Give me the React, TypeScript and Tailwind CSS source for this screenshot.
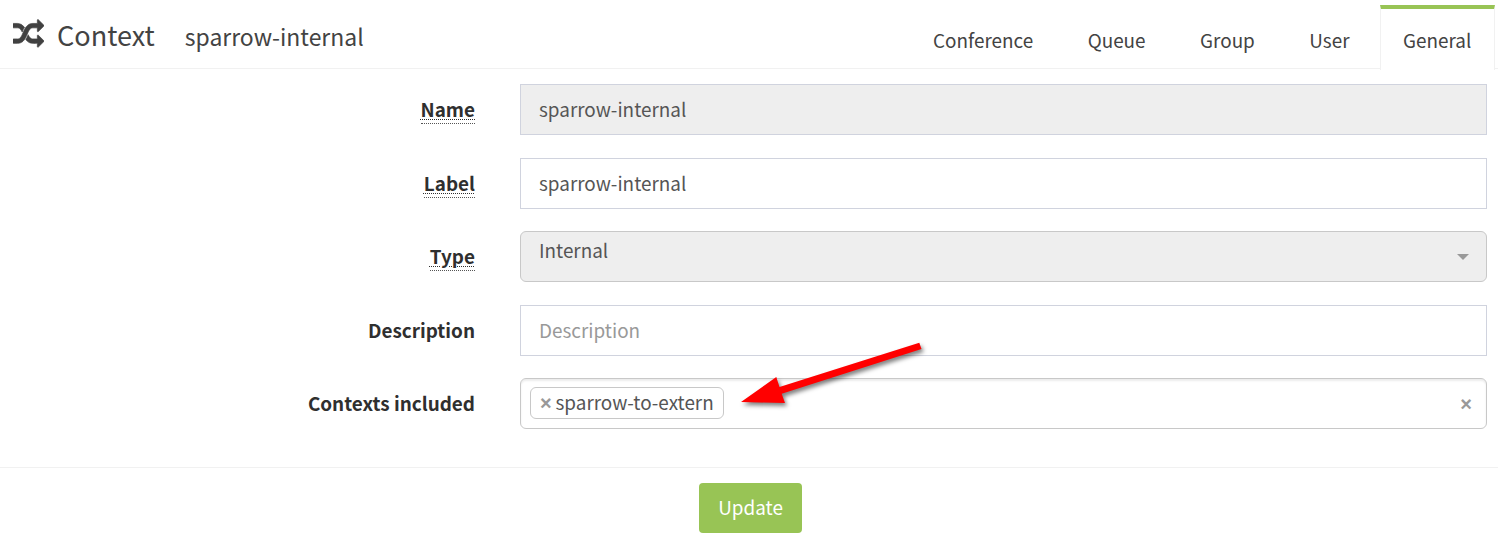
import type { ReactNode } from "react";

const tabs = ["Conference", "Queue", "Group", "User"];

function ShuffleIcon() {
  return (
    <svg viewBox="0 0 1792 1792" className="h-[31px] w-[31px] shrink-0" fill="#414141" stroke="#414141" strokeWidth="40">
      <path d="M666 481q-60 92-137 273-22-45-37-72.500t-40.500-63.500-51-56.500-63-35-81.500-14.500h-224q-14 0-23-9t-9-23v-192q0-14 9-23t23-9h224q250 0 410 225zM1792 1280q0 14-9 23l-320 320q-9 9-23 9-13 0-22.500-9.500t-9.500-22.500v-192q-32 0-85 .5t-81 1-73-1-71-5-64-10.500-63-18.500-58-28.500-59-40-55-53.500-56-69.500q59-93 136-273 22 45 37 72.500t40.500 63.500 51 56.500 63 35 81.500 14.500h256v-192q0-14 9-23t23-9q12 0 24 10l319 319q9 9 9 23zM1792 384q0 14-9 23l-320 320q-9 9-23 9-13 0-22.500-9.500t-9.500-22.500v-192h-256q-48 0-87 15t-69 45-51 61.500-45 77.500q-32 62-78 171-29 66-49.500 111t-54 105-64 100-74 83-90 68.500-106.500 42-128 16.500h-224q-14 0-23-9t-9-23v-192q0-14 9-23t23-9h224q48 0 87-15t69-45 51-61.500 45-77.500q32-62 78-171 29-66 49.500-111t54-105 64-100 74-83 90-68.500 106.500-42 128-16.500h256v-192q0-14 9-23t23-9q12 0 24 10l319 319q9 9 9 23z" />
    </svg>
  );
}

function Row({ label, hint, className, children }: { label: string; hint?: boolean; className?: string; children: ReactNode }) {
  return (
    <div className={"flex h-[51px] items-start " + (className ?? "")}>
      <div className="flex w-[475px] shrink-0 justify-end pt-[11px] font-bold text-[#2f2f2f]">
        {hint ? (
          <abbr className="block h-[29px] border-b border-dotted border-[#555] leading-[28px] underline decoration-dotted decoration-1 underline-offset-2">{label}</abbr>
        ) : (
          <span className="leading-[28px]">{label}</span>
        )}
      </div>
      <div className="ml-[45px] h-[51px] w-[967px]">{children}</div>
    </div>
  );
}

export default function App() {
  return (
    <div className="relative flex h-[548px] w-[1498px] flex-col overflow-hidden bg-white font-['Noto_Sans_CJK_SC',sans-serif] text-[18.9px] text-[#555]">
      <header className="flex h-[69px] justify-between border-b border-[#f1f1f1] text-[#434343]">
        <div className="flex pl-[13px] pt-[19px]">
          <ShuffleIcon />
          <h1 className="ml-[13px] mt-px text-[27.1px] leading-[30px]">Context</h1>
          <h2 className="ml-[30px] mt-[2px] text-[22.95px] leading-[30px]">sparrow-internal</h2>
        </div>
        <nav className="-mb-px mt-[5px] flex h-[65px] gap-[8.5px] pr-[3px]">
          {tabs.map((t) => (
            <a key={t} className="px-[23px] pt-[21px] leading-[28px]">{t}</a>
          ))}
          <a className="-ml-px h-[65px] w-[115px] border-x border-t-4 border-x-[#f1f1f1] border-t-[#98c455] bg-white px-[22px] pt-[17px] leading-[28px]">General</a>
        </nav>
      </header>

      <main className="flex h-[398px] flex-col pt-[15px]">
        <Row label="Name" hint>
          <div className="h-full border border-[#d0d3de] bg-[#eee] px-[18px] pt-[10px] leading-[28px]">sparrow-internal</div>
        </Row>
        <Row label="Label" hint className="mt-[23px]">
          <div className="h-full border border-[#d0d3de] px-[18px] pt-[10px] leading-[28px]">sparrow-internal</div>
        </Row>
        <Row label="Type" hint className="mt-[22px]">
          <div className="flex h-full justify-between rounded-[6px] border border-[#c8c8c8] bg-[#eee] pl-[18px] pr-[17px] pt-[4px] leading-[28px]">
            Internal
            <svg className="mt-[18px] h-[6px] w-[12px]" viewBox="0 0 12 6"><path d="M0 0h12L6 6z" fill="#999" /></svg>
          </div>
        </Row>
        <Row label="Description" className="mt-[23px]">
          <div className="h-full border border-[#d0d3de] px-[18px] pt-[10px] leading-[28px] text-[#999]">Description</div>
        </Row>
        <Row label="Contexts included" className="mt-[22px]">
          <div className="flex h-full items-start justify-between rounded-[6px] border border-[#c8c8c8] pl-[9px] pr-[14px] pt-[8px] shadow-[inset_0_2px_2px_rgba(0,0,0,0.075)]">
            <span className="flex h-[32px] w-[194px] rounded-[6px] border border-[#c8c8c8] bg-white pl-[9px] leading-[30px]">
              <span className="w-[15.5px] font-['Liberation_Sans',sans-serif] text-[20px] font-bold text-[#999]">×</span>
              <span className="whitespace-nowrap leading-[28px]">sparrow-to-extern</span>
            </span>
            <span className="mt-[2px] font-['Liberation_Sans',sans-serif] text-[20px] font-bold leading-[30px] text-[#999]">×</span>
          </div>
        </Row>
      </main>

      <footer className="flex flex-1 items-start justify-center border-t border-[#f1f1f1] pt-[15px] pl-[3px]">
        <button className="h-[50px] w-[103px] rounded-[4px] bg-[#98c455] pb-[2px] leading-[28px] text-white">Update</button>
      </footer>

      <svg className="absolute left-[730px] top-[330px] h-[90px] w-[210px] drop-shadow-[2px_3px_2px_rgba(0,0,0,0.5)]" viewBox="730 330 210 90">
        <path d="M741 402 776.300 377 779.500 387 919.300 342.700 921.500 349 781.700 393.700 785 403z" fill="#f00" />
      </svg>
    </div>
  );
}
